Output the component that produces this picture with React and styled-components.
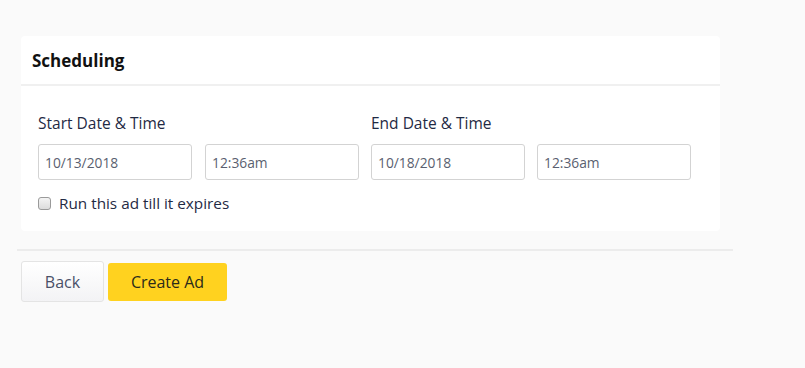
import React from 'react';
import styled, { createGlobalStyle } from 'styled-components';

const GlobalStyle = createGlobalStyle`
  body {
    margin: 0;
    background: #fafafa;
    font-family: "Open Sans", "Liberation Sans", sans-serif;
  }
`;

const Page = styled.div`
  padding: 36px 0 0 17px;
  width: 716px;
`;

const Card = styled.section`
  margin-left: 4px;
  width: 699px;
  background: #ffffff;
  border-radius: 4px;
`;

const CardHeader = styled.header`
  height: 48px;
  display: flex;
  align-items: center;
  padding: 0 11px;
  border-bottom: 2px solid #f0f0f0;
`;

const Title = styled.h3`
  margin: 0;
  font-size: 17px;
  font-weight: 700;
  color: #111111;
`;

const CardBody = styled.div`
  padding: 27px 17px 18px;
`;

const FieldRow = styled.div`
  display: flex;
  gap: 12px;
`;

const FieldGroup = styled.div`
  display: flex;
  flex-direction: column;
`;

const Label = styled.label`
  font-size: 15.5px;
  line-height: 20px;
  color: #1f2a44;
  margin-bottom: 11px;
`;

const Inputs = styled.div`
  display: grid;
  grid-template-columns: 154px 154px;
  column-gap: ${({ gap }) => gap}px;
`;

const Input = styled.input`
  box-sizing: border-box;
  height: 36px;
  width: 100%;
  padding: 0 6px;
  border: 1px solid #d3d3d3;
  border-radius: 3px;
  font-family: inherit;
  font-size: 13.8px;
  color: #5a5f70;
  background: #fff;
  outline: none;
`;

const CheckRow = styled.label`
  display: flex;
  align-items: center;
  gap: 8px;
  margin-top: 13px;
  line-height: 20px;
  font-size: 15.3px;
  color: #1f2a44;
`;

const Box = styled.span`
  box-sizing: border-box;
  width: 13px;
  height: 13px;
  border: 1px solid #9a9a9a;
  border-radius: 3px;
  background: linear-gradient(#f4f4f4, #dcdcdc);
`;

const Divider = styled.hr`
  margin: 18px 0 0;
  border: 0;
  border-top: 2px solid #ececec;
`;

const Actions = styled.div`
  display: flex;
  align-items: center;
  gap: 4px;
  margin: 10px 0 0 4px;
`;

const Button = styled.button`
  box-sizing: border-box;
  height: ${({ primary }) => (primary ? 38 : 41)}px;
  width: ${({ primary }) => (primary ? 119 : 83)}px;
  border-radius: 3px;
  border: ${({ primary }) => (primary ? 'none' : '1px solid #e4e4e4')};
  background: ${({ primary }) =>
    primary ? '#ffd21f' : 'linear-gradient(#ffffff, #f3f3f5)'};
  color: ${({ primary }) => (primary ? '#2b2b1a' : '#4a5068')};
  font-family: inherit;
  font-size: 16px;
  cursor: pointer;
`;

export default function App() {
  return (
    <>
      <GlobalStyle />
      <Page>
        <Card>
          <CardHeader>
            <Title>Scheduling</Title>
          </CardHeader>
          <CardBody>
            <FieldRow>
              <FieldGroup>
                <Label>Start Date &amp; Time</Label>
                <Inputs gap={13}>
                  <Input defaultValue="10/13/2018" />
                  <Input defaultValue="12:36am" />
                </Inputs>
              </FieldGroup>
              <FieldGroup>
                <Label>End Date &amp; Time</Label>
                <Inputs gap={12}>
                  <Input defaultValue="10/18/2018" />
                  <Input defaultValue="12:36am" />
                </Inputs>
              </FieldGroup>
            </FieldRow>
            <CheckRow>
              <Box />
              Run this ad till it expires
            </CheckRow>
          </CardBody>
        </Card>
        <Divider />
        <Actions>
          <Button>Back</Button>
          <Button primary>Create Ad</Button>
        </Actions>
      </Page>
    </>
  );
}
